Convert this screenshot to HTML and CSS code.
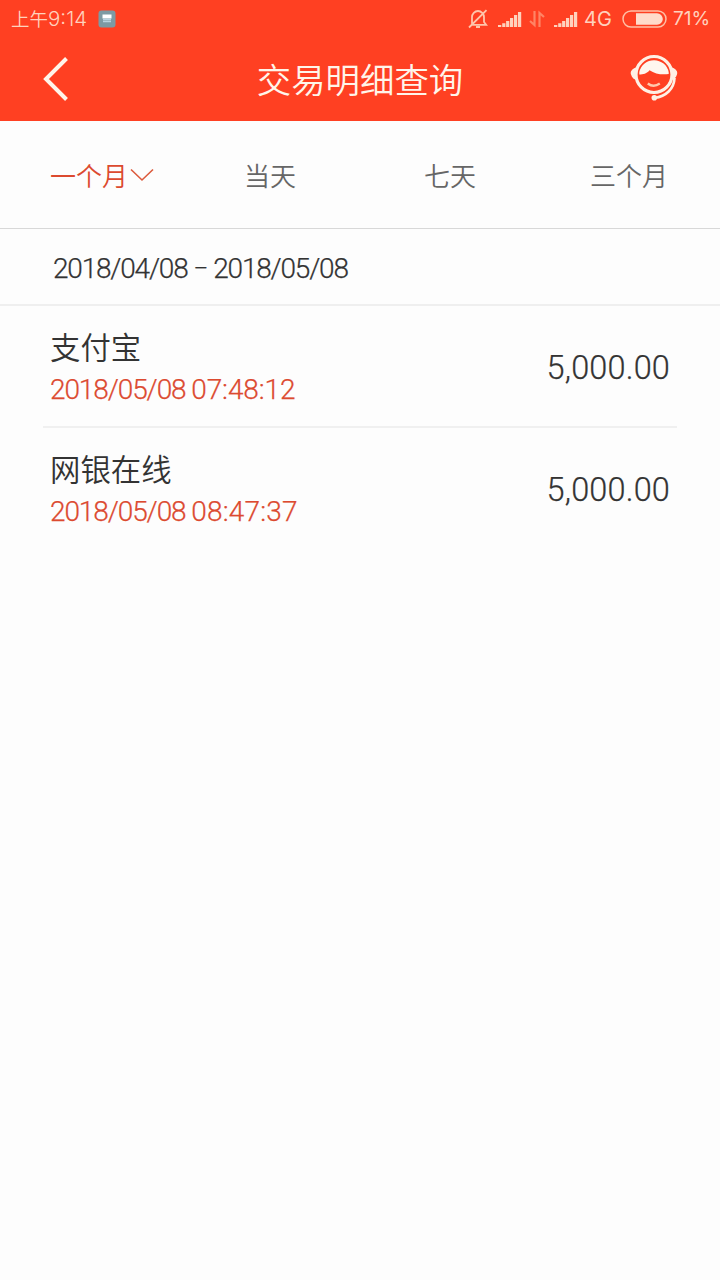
FILE: index.html
```html
<!DOCTYPE html>
<html lang="zh-CN">
<head>
<meta charset="utf-8">
<title>交易明细查询</title>
<link rel="stylesheet" href="styles.css">
</head>
<body>
<header class="header">
  <div class="status">
    <span class="clock">上午<span class="clock-num">9:14</span></span>
    <svg class="app-badge" width="18" height="18" viewBox="0 0 18 18"><rect x=".5" y=".5" width="17" height="17" rx="3" fill="#7d9aa3"/><path d="M4.500 5.500h9M4.500 7.500h9" stroke="#fff" stroke-width="2"/><path d="M5 9.500h8M5 11.500h8" stroke="#b9d3e0" stroke-width="1.500"/></svg>
    <span class="spacer"></span>
    <svg class="bell" width="20" height="20" viewBox="0 0 20 20" fill="none" stroke="#ffc5ab" stroke-width="1.8"><path d="M4 14.800V8.200a6 6.200 0 0 1 12 0V13l2.200 2.800H3M8 18h4M1 18.500L18.500 1.200"/></svg>
    <svg class="signal" width="24" height="18" viewBox="0 0 24 18" fill="#ffd2bd"><path d="M0 15h3.300v2H0zM4.200 13.300h3.200V17H4.200zM8.100 11h3.200v6H8.100zM12 8h3.200v9H12zM16 5h3.200v12H16zM20 2h3.200v15H20z"/></svg>
    <svg class="data" width="16" height="18" viewBox="0 0 16 18" fill="none" stroke="#ff8465" stroke-width="2.200"><path d="M5.500 1v14L1 11M10.500 17V3L15 7"/></svg>
    <svg class="signal2" width="24" height="18" viewBox="0 0 24 18" fill="#ffd2bd"><path d="M0 15h3.300v2H0zM4.200 13.300h3.200V17H4.200zM8.100 11h3.200v6H8.100zM12 8h3.200v9H12zM16 5h3.200v12H16zM20 2h3.200v15H20z"/></svg>
    <span class="network">4G</span>
    <svg class="battery" width="45" height="18" viewBox="0 0 45 18"><rect x="1" y="1" width="43" height="16" rx="8" fill="none" stroke="#ffc0a6" stroke-width="1.500"/><path d="M14 3.200h21a5.800 5.800 0 0 1 0 11.600H14z" fill="#ffdccb"/></svg>
    <span class="percent">71%</span>
  </div>
  <div class="titlebar">
    <svg class="back" width="28" height="46" viewBox="0 0 28 46" fill="none" stroke="#fff5ea" stroke-width="4"><path d="M23.500 2.500L3 23l20.500 20.500"/></svg>
    <h1 class="title">交易明细查询</h1>
    <svg class="service" width="48" height="48" viewBox="0 0 48 48">
      <path d="M6 14.500C2 16 0 18.500 1 21.500s3 5.500 6.500 5.500zM42 14.500c4 1.500 6 4 5 7s-3 5.500-6.500 5.500z" fill="#fff0e5"/>
      <circle cx="24" cy="21.500" r="18" fill="#ff4022" stroke="#fff0e5" stroke-width="3.200"/>
      <path d="M9.300 21.500V19A15 15 0 0 1 38.700 19.300V21C32 22 25 21 19.500 17.200 17 20.500 13 21.500 9.300 21.500z" fill="#fff7ef"/>
      <path d="M17.800 30.500q5.700 4.500 12 0" fill="none" stroke="#ffc9ac" stroke-width="2.300"/>
      <path d="M44.500 25C44 36 36 43.500 24.500 45" fill="none" stroke="#fff0e5" stroke-width="2.700"/>
      <circle cx="24.300" cy="44.800" r="2.800" fill="#fff0e5"/>
    </svg>
  </div>
</header>
<nav class="tabs">
  <span class="tab active">一个月<svg class="chevron" width="24" height="14" viewBox="0 0 24 14" fill="none" stroke="#dc5a3c" stroke-width="1.600"><path d="M1 1.500l11 10.500L23 1.500"/></svg></span>
  <span class="tab today">当天</span>
  <span class="tab week">七天</span>
  <span class="tab quarter">三个月</span>
</nav>
<div class="range">2018/04/08 <span class="dash">–</span> 2018/05/08</div>
<main class="list">
  <div class="row">
    <div class="info"><div class="name">支付宝</div><div class="time">2018/05/08 <span class="hours">07:48:12</span></div></div>
    <div class="amount">5,000.00</div>
  </div>
  <div class="row">
    <div class="info"><div class="name">网银在线</div><div class="time">2018/05/08 <span class="hours wide">08:47:37</span></div></div>
    <div class="amount">5,000.00</div>
  </div>
</main>
</body>
</html>
```
FILE: styles.css
```css
* { box-sizing: border-box; }
body {
  margin: 0;
  min-height: 1280px;
  background: #fdfdfd;
  color: #333;
  font-family: Roboto, "Noto Sans CJK SC", sans-serif;
}
svg { display: block; flex: none; }
.header { height: 121px; background: #ff4022; }
.status {
  display: flex;
  align-items: center;
  height: 37px;
  padding: 0 12px 0 11px;
  color: #ffd2bd;
  font: 20px/37px Inter, "Noto Sans CJK SC", sans-serif;
  white-space: nowrap;
}
.clock { width: 77px; padding-top: 1px; font-size: 18.5px; font-weight: 350; }
.clock-num { font-size: 20.5px; }
.app-badge { margin-left: 10px; }
.spacer { flex: 1; }
.bell { margin-right: 10px; }
.data { margin: 0 9px 0 7px; }
.signal2 { margin-right: 6px; }
.network { width: 28px; padding-top: 1px; }
.battery { margin: 0 6px 0 10px; }
.percent { width: 35px; font-size: 19px; }
.titlebar {
  display: grid;
  grid-template-columns: 80px 1fr 80px;
  align-items: center;
  height: 84px;
}
.back { margin-left: 43px; }
.title {
  margin: 0;
  padding-bottom: 3px;
  text-align: center;
  color: #fff5ea;
  font-family: "Noto Sans CJK SC", sans-serif;
  font-size: 34.4px;
  font-weight: 350;
  line-height: 50px;
}
.service { margin: -4px 0 0 -10px; }
.tabs {
  display: grid;
  grid-template-columns: 194px 180px 166px 1fr;
  align-items: center;
  height: 108px;
  padding-left: 50px;
  border-bottom: 1px solid #d8d8d8;
  color: #666;
  font-family: "Noto Sans CJK SC", sans-serif;
  font-size: 26px;
  font-weight: 350;
}
.tab { line-height: 40px; }
.active { display: flex; align-items: center; color: #dc4a30; }
.chevron { margin-left: 2px; }
.range {
  height: 77px;
  padding-left: 53px;
  border-bottom: 2px solid #efefef;
  font-size: 28px;
  font-weight: 350;
  letter-spacing: -1.2px;
  line-height: 80px;
  -webkit-text-stroke: .25px;
}
.dash { display: inline-block; width: 14.5px; font-size: 22px; line-height: 1; text-align: center; vertical-align: 2px; }
.list { padding: 0 43px; }
.row {
  display: flex;
  align-items: center;
  justify-content: space-between;
  height: 120px;
  padding: 4px 7px 0;
}
.row + .row { height: 122px; padding-top: 4px; border-top: 2px solid #f0f0f0; }
.name { font-family: "Noto Sans CJK SC", sans-serif; font-size: 30.4px; font-weight: 350; line-height: 42px; }
.time {
  color: #dc4a30;
  font-size: 28px;
  font-weight: 350;
  letter-spacing: -1.1px;
  line-height: 45px;
  -webkit-text-stroke: .25px;
}
.hours { letter-spacing: -.1px; }
.wide { letter-spacing: .2px; }
.amount { padding-top: 0; font-size: 32.5px; font-weight: 350; letter-spacing: .15px; -webkit-text-stroke: .25px; }
```
